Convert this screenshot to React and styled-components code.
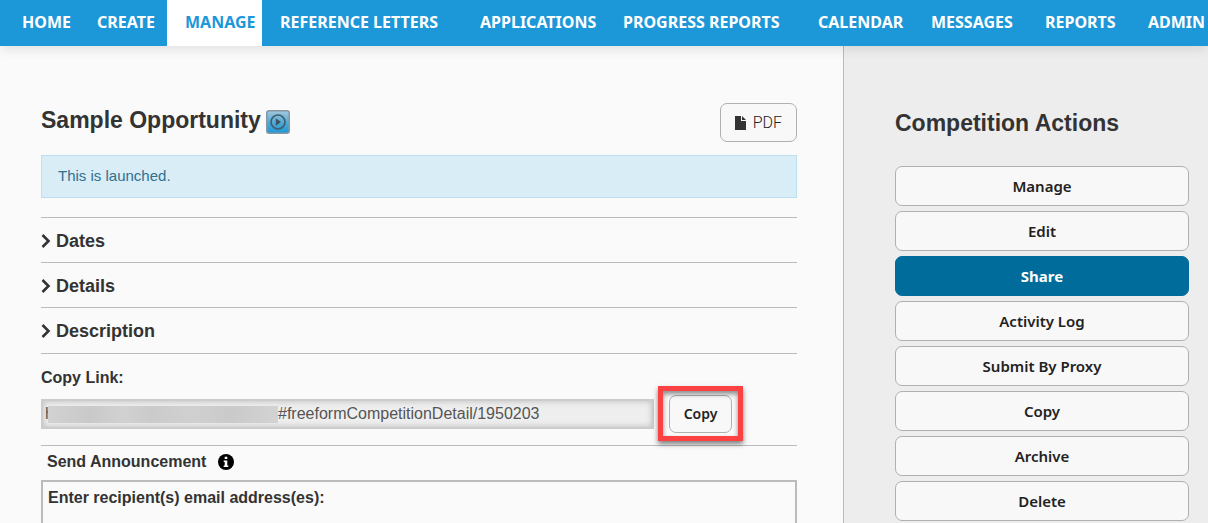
import React from "react";
import styled, { createGlobalStyle } from "styled-components";

const ui = '"Liberation Sans", Arial, sans-serif';
const brand = '"Noto Sans", "Open Sans", sans-serif';

const GlobalStyle = createGlobalStyle`
  *, *::before, *::after { box-sizing: border-box; }
  body { margin: 0; background: #fafafa; color: #333; font-family: ${ui}; font-size: 16px; }
  h1, h2, h3, p, ul { margin: 0; padding: 0; }
`;

const Page = styled.div`
  display: flex;
  flex-direction: column;
  min-height: 100vh;
`;

const NavBar = styled.nav`
  position: relative;
  z-index: 1;
  background: #1c97d8;
  box-shadow: 0 2px 12px rgba(0, 0, 0, 0.12);
`;

const NavList = styled.ul`
  display: grid;
  grid-template-columns: 75fr 88fr 95fr 200fr 143fr 195fr 113fr 114fr 103fr 78fr;
  list-style: none;
  padding-left: 4px;
`;

const NavLink = styled.a`
  display: block;
  height: 46px;
  padding-left: 18px;
  font: 700 16px/44px ${brand};
  text-decoration: none;
  white-space: nowrap;
  color: ${(p) => (p.$active ? "#1c97d8" : "#fff")};
  background: ${(p) => (p.$active ? "#fff" : "transparent")};
`;

const Columns = styled.div`
  display: flex;
  flex: 1;
`;

const Main = styled.main`
  display: flex;
  flex-direction: column;
  flex: 1;
  min-width: 0;
  padding: 57px 46px 0 41px;
`;

const Sidebar = styled.aside`
  flex: 0 0 365px;
  padding: 62px 19px 0 51px;
  background: #ededed;
  border-left: 1px solid #bbb;
`;

const TitleRow = styled.div`
  display: flex;
  justify-content: space-between;
  margin-bottom: 13px;
`;

const Title = styled.h1`
  display: flex;
  gap: 5px;
  font-size: 23px;
  line-height: 34px;
  svg { margin-top: 7px; }
`;

const Button = styled.button`
  display: flex;
  align-items: center;
  justify-content: center;
  height: 39px;
  padding: 0 14px;
  border: 1px solid #b0b0b0;
  border-radius: 7px;
  background: #f8f8f8;
  color: #222;
  font: 600 14px/20px ${brand};
`;

const PdfButton = styled(Button)`
  gap: 7px;
  font: 300 16px/20px Roboto, ${ui};
`;

const Notice = styled.p`
  height: 43px;
  padding: 0 16px;
  margin-bottom: 19px;
  border: 1px solid #bce0f0;
  background: #d9edf7;
  color: #31708f;
  font-size: 15px;
  line-height: 40px;
`;

const Section = styled.h2`
  height: 45px;
  border-top: 1px solid #bbb;
`;

const SectionToggle = styled.button`
  display: flex;
  align-items: center;
  gap: 5px;
  width: 100%;
  height: 44px;
  padding: 2px 0 0;
  border: 0;
  background: none;
  color: #333;
  font: 700 18px/24px ${ui};
`;

const CopyBlock = styled.div`
  margin-top: 1px;
  padding: 13px 0 12px;
  border: solid #bbb;
  border-width: 1px 0;
`;

const Label = styled.label`
  display: block;
  font-weight: 700;
  line-height: 22px;
`;

const CopyRow = styled.div`
  display: flex;
  align-items: center;
  gap: 15px;
  height: 39px;
  margin-top: 5px;
  padding-right: 65px;
`;

const LinkField = styled.div`
  display: flex;
  align-items: center;
  flex: 1;
  min-width: 0;
  height: 30px;
  padding-left: 2px;
  border: 2px solid #ccc;
  background: #eee;
  box-shadow: inset 0 0 6px rgba(0, 0, 0, 0.22);
`;

const LinkStart = styled.span`
  width: 3px;
  color: #555;
  line-height: 20px;
`;

const Redaction = styled.span`
  position: relative;
  width: 230px;
  height: 17px;
  margin-top: 2px;
  background: linear-gradient(90deg, #d2d2d2, #c9c9c9 18%, #d1d1d1 32%, #cbcbcb 45%, #d0d0d0 62%, #cacaca 80%, #d3d3d3);
`;

const LinkInput = styled.input`
  flex: 1;
  min-width: 0;
  height: 22px;
  padding: 0;
  border: 0;
  outline: 0;
  background: none;
  color: #555;
  font: 16px/20px ${ui};
`;

const CopyButton = styled(Button)`
  position: relative;
  flex: none;
  width: 63px;
  height: 38px;
  padding: 0;
`;

const Highlight = styled.span`
  position: absolute;
  inset: -10px -12px -9px;
  border: 5px solid #fc4143;
  box-shadow: 0 3px 5px rgba(0, 0, 0, 0.5), inset 0 3px 5px rgba(0, 0, 0, 0.45);
  pointer-events: none;
`;

const Announcement = styled.h3`
  display: flex;
  align-items: center;
  gap: 12px;
  height: 34px;
  padding: 0 6px 2px;
  font-size: 16px;
`;

const Recipients = styled.section`
  flex: 1;
  padding: 5px 5px 0;
  border: 2px solid #bbb;
  border-bottom: 0;
`;

const SidebarTitle = styled.h2`
  margin-bottom: 28px;
  font-size: 23px;
  line-height: 30px;
`;

const ActionList = styled.div`
  display: grid;
  gap: 5px;
`;

const ActionButton = styled(Button)`
  width: 100%;
  height: 40px;
  font-size: 15px;
  ${(p) => p.$active && "background: #006c9b; border-color: #006c9b; color: #fff; font-weight: 700;"}
`;

const navItems = ["Home", "Create", "Manage", "Reference Letters", "Applications", "Progress Reports", "Calendar", "Messages", "Reports", "Admin"];
const actions = ["Manage", "Edit", "Share", "Activity Log", "Submit By Proxy", "Copy", "Archive", "Delete"];

function LaunchIcon() {
  return (
    <svg width="24" height="24" viewBox="0 0 24 24" aria-hidden="true">
      <defs>
        <linearGradient id="launch" x1="0" y1="0" x2="0" y2="1">
          <stop offset="0" stopColor="#a5c8dd" />
          <stop offset="0.55" stopColor="#4da8d7" />
          <stop offset="1" stopColor="#1c97d8" />
        </linearGradient>
      </defs>
      <rect x="0.75" y="0.75" width="22.5" height="22.5" rx="2.5" fill="url(#launch)" stroke="#8797a1" strokeWidth="1.5" />
      <circle cx="12" cy="12" r="7" fill="none" stroke="#41606f" strokeWidth="1.7" />
      <path d="M9.8 8.3v7.4l5.2-3.7z" fill="#3c5460" />
    </svg>
  );
}

function FileIcon() {
  return (
    <svg width="11" height="14" viewBox="0 0 11 14" fill="#333" aria-hidden="true">
      <path d="M0 0h6v5h5v9H0z" />
      <path d="M7 0l4 4H7z" />
    </svg>
  );
}

function Chevron() {
  return (
    <svg width="10" height="14" viewBox="0 0 10 14" aria-hidden="true">
      <path d="M1.5 1L7.5 7L1.5 13" fill="none" stroke="#333" strokeWidth="2.6" />
    </svg>
  );
}

function InfoIcon() {
  return (
    <svg width="16" height="16" viewBox="0 0 16 16" aria-hidden="true">
      <circle cx="8" cy="8" r="8" fill="#000" />
      <path d="M6.7 2.7h2.6v2.4H6.7zM5.7 6.4h3.6v5h1v1.5H5.7v-1.5h1V7.9h-1z" fill="#fff" />
    </svg>
  );
}

export default function App() {
  return (
    <Page>
      <GlobalStyle />
      <NavBar>
        <NavList>
          {navItems.map((item) => (
            <li key={item}>
              <NavLink href="#" $active={item === "Manage"}>{item.toUpperCase()}</NavLink>
            </li>
          ))}
        </NavList>
      </NavBar>
      <Columns>
        <Main>
          <TitleRow>
            <Title>Sample Opportunity <LaunchIcon /></Title>
            <PdfButton type="button"><FileIcon />PDF</PdfButton>
          </TitleRow>
          <Notice>This is launched.</Notice>
          {["Dates", "Details", "Description"].map((name) => (
            <Section key={name}>
              <SectionToggle type="button" aria-expanded="false"><Chevron />{name}</SectionToggle>
            </Section>
          ))}
          <CopyBlock>
            <Label htmlFor="link">Copy Link:</Label>
            <CopyRow>
              <LinkField>
                <LinkStart>h</LinkStart>
                <Redaction />
                <LinkInput id="link" readOnly defaultValue="#freeformCompetitionDetail/1950203" />
              </LinkField>
              <CopyButton type="button">Copy<Highlight /></CopyButton>
            </CopyRow>
          </CopyBlock>
          <Announcement>Send Announcement <InfoIcon /></Announcement>
          <Recipients>
            <Label as="p">Enter recipient(s) email address(es):</Label>
          </Recipients>
        </Main>
        <Sidebar>
          <SidebarTitle>Competition Actions</SidebarTitle>
          <ActionList>
            {actions.map((name) => (
              <ActionButton key={name} type="button" $active={name === "Share"}>{name}</ActionButton>
            ))}
          </ActionList>
        </Sidebar>
      </Columns>
    </Page>
  );
}
